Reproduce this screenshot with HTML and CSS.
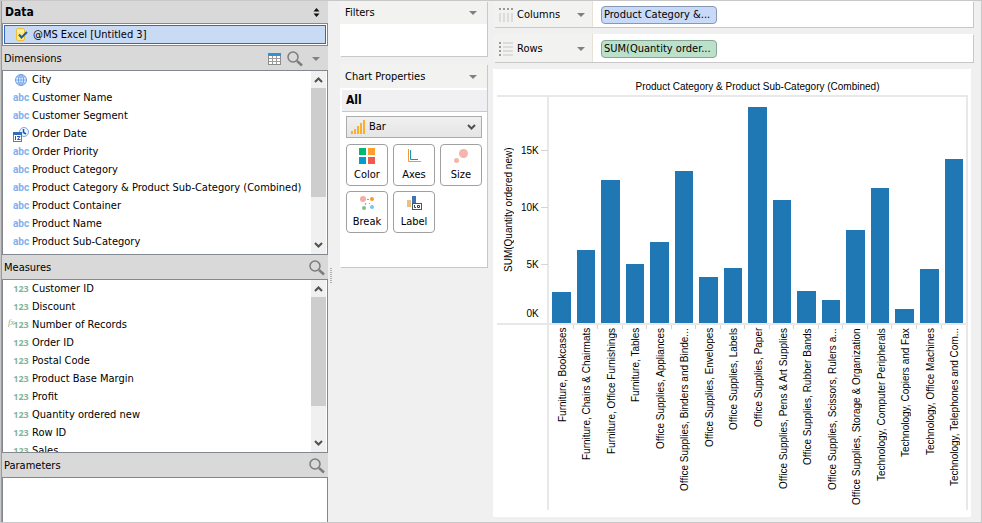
FILE: index.html
```
<!DOCTYPE html>
<html lang="en">
<head>
    <meta charset="UTF-8">
    <meta name="viewport" content="width=device-width, initial-scale=1.0">
    <title>Chart Designer</title>
    <link rel="stylesheet" href="styles.css">
</head>
<body>

<!-- Shared icons -->
<svg class="defs" aria-hidden="true">
    <symbol id="search" viewBox="0 0 16 16">
        <circle cx="6" cy="6" r="5" fill="none" stroke="#7c7c7c" stroke-width="1.5"/>
        <path d="M10 10L15 14.500" stroke="#7c7c7c" stroke-width="2.400"/>
    </symbol>
    <symbol id="chev-up" viewBox="0 0 9 6"><path d="M1 5L4.500 1.500L8 5" fill="none" stroke="#505050" stroke-width="2"/></symbol>
    <symbol id="chev-down" viewBox="0 0 9 6"><path d="M1 1L4.500 4.500L8 1" fill="none" stroke="#505050" stroke-width="2"/></symbol>
</svg>

<div class="app">

    <!-- Data panel -->
    <aside class="data">
        <div class="bar">
            <h1>Data</h1>
            <button class="icon-btn" aria-label="Switch data source">
                <svg width="7" height="9" viewBox="0 0 7 9"><path d="M3.500 0L6.500 3.500H.5zM3.500 9L6.500 5.500H.5z" fill="#111"/></svg>
            </button>
        </div>
        <div class="source">
            <button class="source-item">
                <svg width="12" height="13" viewBox="0 0 12 13">
                    <rect x=".5" y=".5" width="8" height="12" rx="1.500" fill="#ffe98f" stroke="#f0c232"/>
                    <path d="M1 3h7" stroke="#fff6cc"/>
                    <path d="M3 6.500L5.500 9.500L11 4" fill="none" stroke="#1f5f9f" stroke-width="2"/>
                </svg>
                @MS Excel [Untitled 3]
            </button>
        </div>

        <div class="bar">
            <h2>Dimensions</h2>
            <button class="icon-btn" aria-label="View data">
                <svg width="13" height="12" viewBox="0 0 13 12">
                    <rect x=".5" y=".5" width="12" height="11" fill="#fff" stroke="#8c8c8c"/>
                    <path d="M0 1.500h13" stroke="#3392cd" stroke-width="3"/>
                    <path d="M1 5.500h11M1 8.500h11M4.500 3v8M8.500 3v8" stroke="#9c9c9c"/>
                </svg>
            </button>
            <button class="icon-btn" aria-label="Search dimensions"><svg width="16" height="16"><use href="#search"/></svg></button>
            <button class="icon-btn menu" aria-label="Dimensions menu"><span class="arrow"></span></button>
        </div>
        <div class="list dimensions">
            <ul>
                <li><span class="type"><svg width="12" height="12" viewBox="0 0 12 12"><circle cx="6" cy="6" r="5.500" fill="#e6f0fd" stroke="#6a9fe8"/><ellipse cx="6" cy="6" rx="2.500" ry="5.500" fill="none" stroke="#6a9fe8"/><path d="M6 0v12M0 6h12M1.500 3h9M1.500 9h9" stroke="#6a9fe8" stroke-width=".8"/></svg></span>City</li>
                <li><span class="type abc">abc</span>Customer Name</li>
                <li><span class="type abc">abc</span>Customer Segment</li>
                <li><span class="type"><svg width="16" height="15" viewBox="0 0 16 15"><circle cx="11" cy="5" r="4.500" fill="#eef5ff" stroke="#78a9ea"/><path d="M10.500 2v3.500L13 7" fill="none" stroke="#1d5aa8" stroke-width="1.500"/><rect x=".5" y="5.500" width="8" height="9" fill="#fff" stroke="#4a7fc4"/><path d="M0 6.500h9" stroke="#2f6dbd" stroke-width="3"/><path d="M2.500 9v4M4 9.500h3L4.500 12.500H7.500" fill="none" stroke="#1d5aa8"/></svg></span>Order Date</li>
                <li><span class="type abc">abc</span>Order Priority</li>
                <li><span class="type abc">abc</span>Product Category</li>
                <li><span class="type abc">abc</span>Product Category &amp; Product Sub-Category (Combined)</li>
                <li><span class="type abc">abc</span>Product Container</li>
                <li><span class="type abc">abc</span>Product Name</li>
                <li><span class="type abc">abc</span>Product Sub-Category</li>
            </ul>
            <div class="scroll">
                <svg width="9" height="6"><use href="#chev-up"/></svg>
                <div class="thumb"></div>
                <svg width="9" height="6"><use href="#chev-down"/></svg>
            </div>
        </div>

        <div class="bar">
            <h2>Measures</h2>
            <button class="icon-btn" aria-label="Search measures"><svg width="16" height="16"><use href="#search"/></svg></button>
        </div>
        <div class="list measures">
            <ul>
                <li><span class="type num">123</span>Customer ID</li>
                <li><span class="type num">123</span>Discount</li>
                <li><span class="type num"><i class="fx">fx</i>123</span>Number of Records</li>
                <li><span class="type num">123</span>Order ID</li>
                <li><span class="type num">123</span>Postal Code</li>
                <li><span class="type num">123</span>Product Base Margin</li>
                <li><span class="type num">123</span>Profit</li>
                <li><span class="type num">123</span>Quantity ordered new</li>
                <li><span class="type num">123</span>Row ID</li>
                <li><span class="type num">123</span>Sales</li>
            </ul>
            <div class="scroll">
                <svg width="9" height="6"><use href="#chev-up"/></svg>
                <div class="thumb"></div>
                <svg width="9" height="6"><use href="#chev-down"/></svg>
            </div>
        </div>

        <div class="bar">
            <h2>Parameters</h2>
            <button class="icon-btn" aria-label="Search parameters"><svg width="16" height="16"><use href="#search"/></svg></button>
        </div>
        <div class="list parameters"></div>
    </aside>

    <div class="splitter"><span class="grip"></span></div>

    <!-- Filters and chart properties -->
    <section class="props">
        <div class="card filters">
            <div class="card-head"><h2>Filters</h2><button class="icon-btn" aria-label="Filters menu"><span class="arrow"></span></button></div>
        </div>
        <div class="card chart-props">
            <div class="card-head"><h2>Chart Properties</h2><button class="icon-btn" aria-label="Chart properties menu"><span class="arrow"></span></button></div>
            <h3>All</h3>
            <label class="chart-type">
                <svg width="14" height="14" viewBox="0 0 14 14"><path d="M0 11h2v3H0zM3 9h2v5H3zM6 6h2v8H6zM9 3h2v11H9zM12 0h2v14h-2z" fill="#fbb02d"/></svg>
                <select aria-label="Chart type"><option>Bar</option></select>
                <svg width="9" height="6"><use href="#chev-down"/></svg>
            </label>
            <div class="tools">
                <button>
                    <svg width="16" height="16" viewBox="0 0 16 16"><path d="M0 0h7v7H0z" fill="#00b871"/><path d="M9 0h7v7H9z" fill="#ff9e2c"/><path d="M0 9h7v7H0z" fill="#009fcb"/><path d="M9 9h7v7H9z" fill="#f05a4b"/></svg>
                    Color
                </button>
                <button>
                    <svg width="16" height="16" viewBox="0 0 16 16"><path d="M2.500 1v12.500H15" fill="none" stroke="#f3982f"/><path d="M4.500 2v9.500H12" fill="none" stroke="#0e96c8"/></svg>
                    Axes
                </button>
                <button>
                    <svg width="16" height="16" viewBox="0 0 16 16"><circle cx="10.500" cy="5.500" r="4.500" fill="#f5b5aa"/><circle cx="3.500" cy="12.500" r="2.500" fill="#f5b5aa"/></svg>
                    Size
                </button>
                <button>
                    <svg width="16" height="16" viewBox="0 0 16 16"><path d="M8 4.500h2M6 10l1-2M10 8l1 1" stroke="#999"/><circle cx="4" cy="4" r="3" fill="#f5aca4"/><circle cx="13" cy="4" r="2" fill="#f9992c"/><circle cx="5" cy="13" r="2" fill="#80bf85"/><circle cx="13" cy="12" r="2" fill="#72c5fa"/></svg>
                    Break
                </button>
                <button>
                    <svg width="16" height="16" viewBox="0 0 16 16"><path d="M1 5h4v7H1z" fill="#ebc181"/><path d="M6 1h4v11H6z" fill="#4175b1"/><rect x="6.500" y="8.500" width="9" height="6" fill="#fff" stroke="#4b5563"/><path d="M8.500 10v2.500H10M11.500 10.500h2v2h-2z" fill="none" stroke="#374151"/></svg>
                    Label
                </button>
            </div>
        </div>
    </section>

    <!-- Shelves and chart -->
    <main class="view">
        <div class="shelf">
            <div class="shelf-head">
                <svg width="14" height="14" viewBox="0 0 14 14"><path d="M1 5v9M5 5v9M9 5v9M13 5v9" stroke="#dcdcdc" stroke-width="2"/><path d="M0 1h2M4 1h2M8 1h2M12 1h2" stroke="#999" stroke-width="2"/></svg>
                <h2>Columns</h2>
                <button class="icon-btn" aria-label="Columns menu"><span class="arrow"></span></button>
            </div>
            <button class="pill blue">Product Category &amp;...</button>
        </div>
        <div class="shelf">
            <div class="shelf-head">
                <svg width="14" height="14" viewBox="0 0 14 14"><path d="M4 1h10M4 5h10M4 9h10M4 13h10" stroke="#dcdcdc" stroke-width="2"/><path d="M0 1h2M0 5h2M0 9h2M0 13h2" stroke="#999" stroke-width="2"/></svg>
                <h2>Rows</h2>
                <button class="icon-btn" aria-label="Rows menu"><span class="arrow"></span></button>
            </div>
            <button class="pill green">SUM(Quantity order...</button>
        </div>

        <div class="chart">
            <div class="chart-title">Product Category &amp; Product Sub-Category (Combined)</div>
            <div class="y-axis">
                <div class="y-title">SUM(Quantity ordered new)</div>
                <div class="ticks">
                    <span>15K</span><span>10K</span><span>5K</span><span>0K</span>
                </div>
            </div>
            <div class="plot" id="plot"></div>
            <div class="corner"></div>
            <div class="labels" id="labels"></div>
        </div>
    </main>
</div>

<script>
    // Quantity per sub-category, in thousands
    const MAX = 19.6;
    const data = [
        ['Furniture, Bookcases', 2.7],
        ['Furniture, Chairs & Chairmats', 6.3],
        ['Furniture, Office Furnishings', 12.4],
        ['Furniture, Tables', 5.15],
        ['Office Supplies, Appliances', 7],
        ['Office Supplies, Binders and Binde...', 13.2],
        ['Office Supplies, Envelopes', 3.95],
        ['Office Supplies, Labels', 4.8],
        ['Office Supplies, Paper', 18.75],
        ['Office Supplies, Pens & Art Supplies', 10.7],
        ['Office Supplies, Rubber Bands', 2.75],
        ['Office Supplies, Scissors, Rulers a...', 2],
        ['Office Supplies, Storage & Organization', 8.1],
        ['Technology, Computer Peripherals', 11.7],
        ['Technology, Copiers and Fax', 1.2],
        ['Technology, Office Machines', 4.65],
        ['Technology, Telephones and Com...', 14.2]
    ];

    const plot = document.getElementById('plot');
    const labels = document.getElementById('labels');

    data.forEach(function (row) {
        const bar = document.createElement('div');
        bar.className = 'column';
        bar.style.height = (row[1] / MAX * 100) + '%';
        plot.appendChild(bar);

        const label = document.createElement('div');
        label.className = 'x-label';
        const text = document.createElement('span');
        text.textContent = row[0];
        label.appendChild(text);
        labels.appendChild(label);
    });
</script>

</body>
</html>
```
FILE: styles.css
```
* {
    box-sizing: border-box;
}

body {
    margin: 0;
    background: #f0f0f0;
    color: #000;
    font-family: Tahoma, "DejaVu Sans Condensed", "Noto Sans", sans-serif;
    font-size: 11px;
    line-height: 18px;
}

h1, h2, h3 {
    margin: 0;
    font-size: 11px;
    font-weight: normal;
}

h1, h3 {
    font-size: 12px;
    font-weight: bold;
}

ul {
    margin: 0;
    padding: 0;
    list-style: none;
}

button {
    font: inherit;
    color: inherit;
    cursor: pointer;
}

svg {
    display: block;
    flex: none;
}

.defs {
    display: none;
}

.app {
    display: flex;
    height: 100vh;
    min-height: 523px;
    border: 1px solid #c8c8c8;
}

.icon-btn {
    display: flex;
    align-items: center;
    justify-content: center;
    padding: 0;
    border: none;
    background: none;
}

.arrow {
    border: 4px solid transparent;
    border-top-color: #808080;
    border-bottom: none;
}

/* Data panel */
.data {
    display: flex;
    flex-direction: column;
    flex: none;
    width: 327px;
    background: #d9d9d9;
    border-left: 1px solid #7da2c4;
}

.bar {
    display: flex;
    align-items: center;
    gap: 6px;
    height: 24px;
    flex: none;
    padding: 1px 3px 0 2px;
}

.bar:first-child {
    height: 22px;
    padding: 0 8px 0 3px;
}

.bar h1, .bar h2 {
    flex: 1;
}

.menu {
    width: 14px;
    margin-right: 2px;
}

.source {
    height: 23px;
    flex: none;
    padding: 1px;
    background: #fff;
    border: 1px solid #828790;
}

.source-item {
    display: flex;
    align-items: center;
    gap: 5px;
    width: 100%;
    height: 19px;
    padding: 0 11px;
    background: #c9daf5;
    border: 1px solid #3168c5;
}

.list {
    display: flex;
    overflow: hidden;
    background: #fff;
    border: 1px solid #828790;
}

.list ul {
    flex: 1;
}

.dimensions {
    height: 185px;
}

.measures {
    height: 174px;
}

.parameters {
    flex: 1;
    border-bottom: none;
}

.list li {
    display: flex;
    align-items: center;
    height: 18px;
    white-space: nowrap;
}

.type {
    position: relative;
    display: flex;
    justify-content: center;
    width: 16px;
    margin: 0 3px 0 10px;
}

.abc {
    color: #7fb0f0;
    font-family: Roboto, sans-serif;
    font-size: 10px;
    font-weight: bold;
}

.num {
    color: #83b59b;
    font-family: "Noto Sans", sans-serif;
    font-size: 9px;
    font-weight: bold;
}

.fx {
    position: absolute;
    left: -5px;
    top: -3px;
    font-family: "Liberation Serif", serif;
    font-weight: normal;
}

.scroll {
    display: flex;
    flex-direction: column;
    align-items: center;
    width: 15px;
    margin-right: 1px;
    padding: 6px 0;
    background: #f0f0f0;
}

.thumb {
    width: 15px;
    height: 109px;
    margin: 5px 0 auto;
    background: #cdcdcd;
}

.splitter {
    display: flex;
    align-items: center;
    flex: none;
    width: 12px;
    padding: 28px 0 0 2px;
}

.grip {
    width: 2px;
    height: 16px;
    background: repeating-linear-gradient(#b0b0b0 0 1px, transparent 1px 2px);
}

/* Filters and chart properties */
.props {
    display: flex;
    flex-direction: column;
    gap: 8px;
    flex: none;
    width: 147px;
}

.card {
    padding-left: 2px;
    background: #fff;
    border-radius: 5px 0 0 0;
    box-shadow: 1px 1px #c8c8c8;
}

.card-head {
    display: flex;
    align-items: center;
    justify-content: space-between;
    height: 23px;
    margin-left: -2px;
    padding: 1px 10px 0 5px;
    background: #f2f2f0;
    border-radius: 5px 0 0 0;
}

.filters {
    height: 55px;
}

.chart-props {
    height: 203px;
}

.chart-props .card-head {
    height: 24px;
    margin-bottom: 2px;
}

.card h3 {
    height: 22px;
    padding: 1px 4px;
    background: #f0f0f2;
    border-bottom: 1px solid #c8c8c8;
}

.chart-type {
    display: flex;
    align-items: center;
    gap: 4px;
    height: 22px;
    margin: 4px 5px 0 4px;
    padding: 0 5px 0 4px;
    background: linear-gradient(#f0f0f0, #e5e5e5);
    border: 1px solid #acacac;
}

.chart-type select {
    flex: 1;
    min-width: 0;
    padding: 0;
    border: none;
    background: none;
    appearance: none;
    font: inherit;
    color: inherit;
}

.tools {
    display: grid;
    grid-template-columns: repeat(3, 42px);
    gap: 5px;
    margin: 6px 4px;
}

.tools button {
    display: flex;
    flex-direction: column;
    align-items: center;
    gap: 2px;
    height: 42px;
    padding: 3px 0 0;
    background: #fff;
    border: 1px solid #a0a0a0;
    border-radius: 4px;
}

/* Shelves */
.view {
    display: flex;
    flex-direction: column;
    flex: 1;
    min-width: 0;
    padding: 0 7px 5px 6px;
}

.shelf {
    display: flex;
    align-items: center;
    gap: 8px;
    height: 28px;
    flex: none;
    margin: 0 1px 7px 1px;
    background: #fff;
    border-radius: 5px 0 0 0;
    box-shadow: 1px 1px #c8c8c8;
}

.shelf:first-child {
    height: 26px;
}

.shelf-head {
    display: flex;
    align-items: center;
    gap: 4px;
    width: 99px;
    height: 100%;
    padding: 1px 7px 0 5px;
    background: #f2f2f0;
    border-right: 1px solid #e6e2d6;
    border-radius: 5px 0 0 0;
}

.shelf-head h2 {
    flex: 1;
}

.pill {
    width: 116px;
    height: 18px;
    margin-top: 1px;
    padding: 0 2px;
    border: 1px solid #8798b5;
    border-radius: 4px;
    line-height: 16px;
    text-align: left;
    white-space: nowrap;
}

.blue {
    background: #c9daf8;
}

.green {
    background: #bde0cb;
    border-color: #86a694;
}

/* Chart */
.chart {
    display: grid;
    grid-template-columns: 52px 1fr;
    grid-template-rows: 28px 1fr 194px;
    flex: 1;
    min-height: 0;
    margin-right: 3px;
    padding: 0 3px 0 4px;
    background: #fff;
    font-family: "Liberation Sans", Arial, sans-serif;
    font-size: 10px;
}

.chart-title {
    grid-column: 1 / -1;
    padding: 10px 0 0 50px;
    border-bottom: 2px solid #e8e8e8;
    text-align: center;
    line-height: 16px;
}

.y-axis {
    display: flex;
    justify-content: space-between;
    border-right: 2px solid #e8e8e8;
}

.y-title {
    display: flex;
    align-items: center;
    justify-content: center;
    width: 24px;
    writing-mode: vertical-rl;
    transform: rotate(180deg);
    white-space: nowrap;
}

.ticks {
    display: grid;
    grid-template-rows: 57fr 57fr 57fr 30fr;
    padding-top: 25px;
}

.ticks span {
    display: flex;
    align-items: center;
    justify-content: flex-end;
    gap: 2px;
}

.ticks span::after {
    content: "";
    width: 7px;
    height: 1px;
    background: #d4d4d4;
}

.ticks span:last-child {
    align-items: flex-end;
}

.ticks span:last-child::after {
    background: none;
}

.plot {
    display: flex;
    align-items: flex-end;
    border-right: 2px solid #e8e8e8;
}

.column {
    flex: 1;
    margin: 0 3px;
    background: #1f77b4;
}

.corner {
    border-top: 2px solid #e8e8e8;
    border-right: 2px solid #e8e8e8;
    margin-bottom: 7px;
}

.labels {
    display: flex;
    border-top: 2px solid #e8e8e8;
    border-right: 2px solid #e8e8e8;
    margin-bottom: 7px;
}

.x-label {
    display: flex;
    justify-content: center;
    flex: 1;
    min-width: 0;
    padding: 3px 0 0 3px;
    background: linear-gradient(#d4d4d4, #d4d4d4) right top / 1px 4px no-repeat;
}

.x-label:last-child {
    background: none;
}

.x-label span {
    writing-mode: vertical-rl;
    transform: rotate(180deg);
    text-align: right;
    white-space: nowrap;
    line-height: 16px;
}
```
